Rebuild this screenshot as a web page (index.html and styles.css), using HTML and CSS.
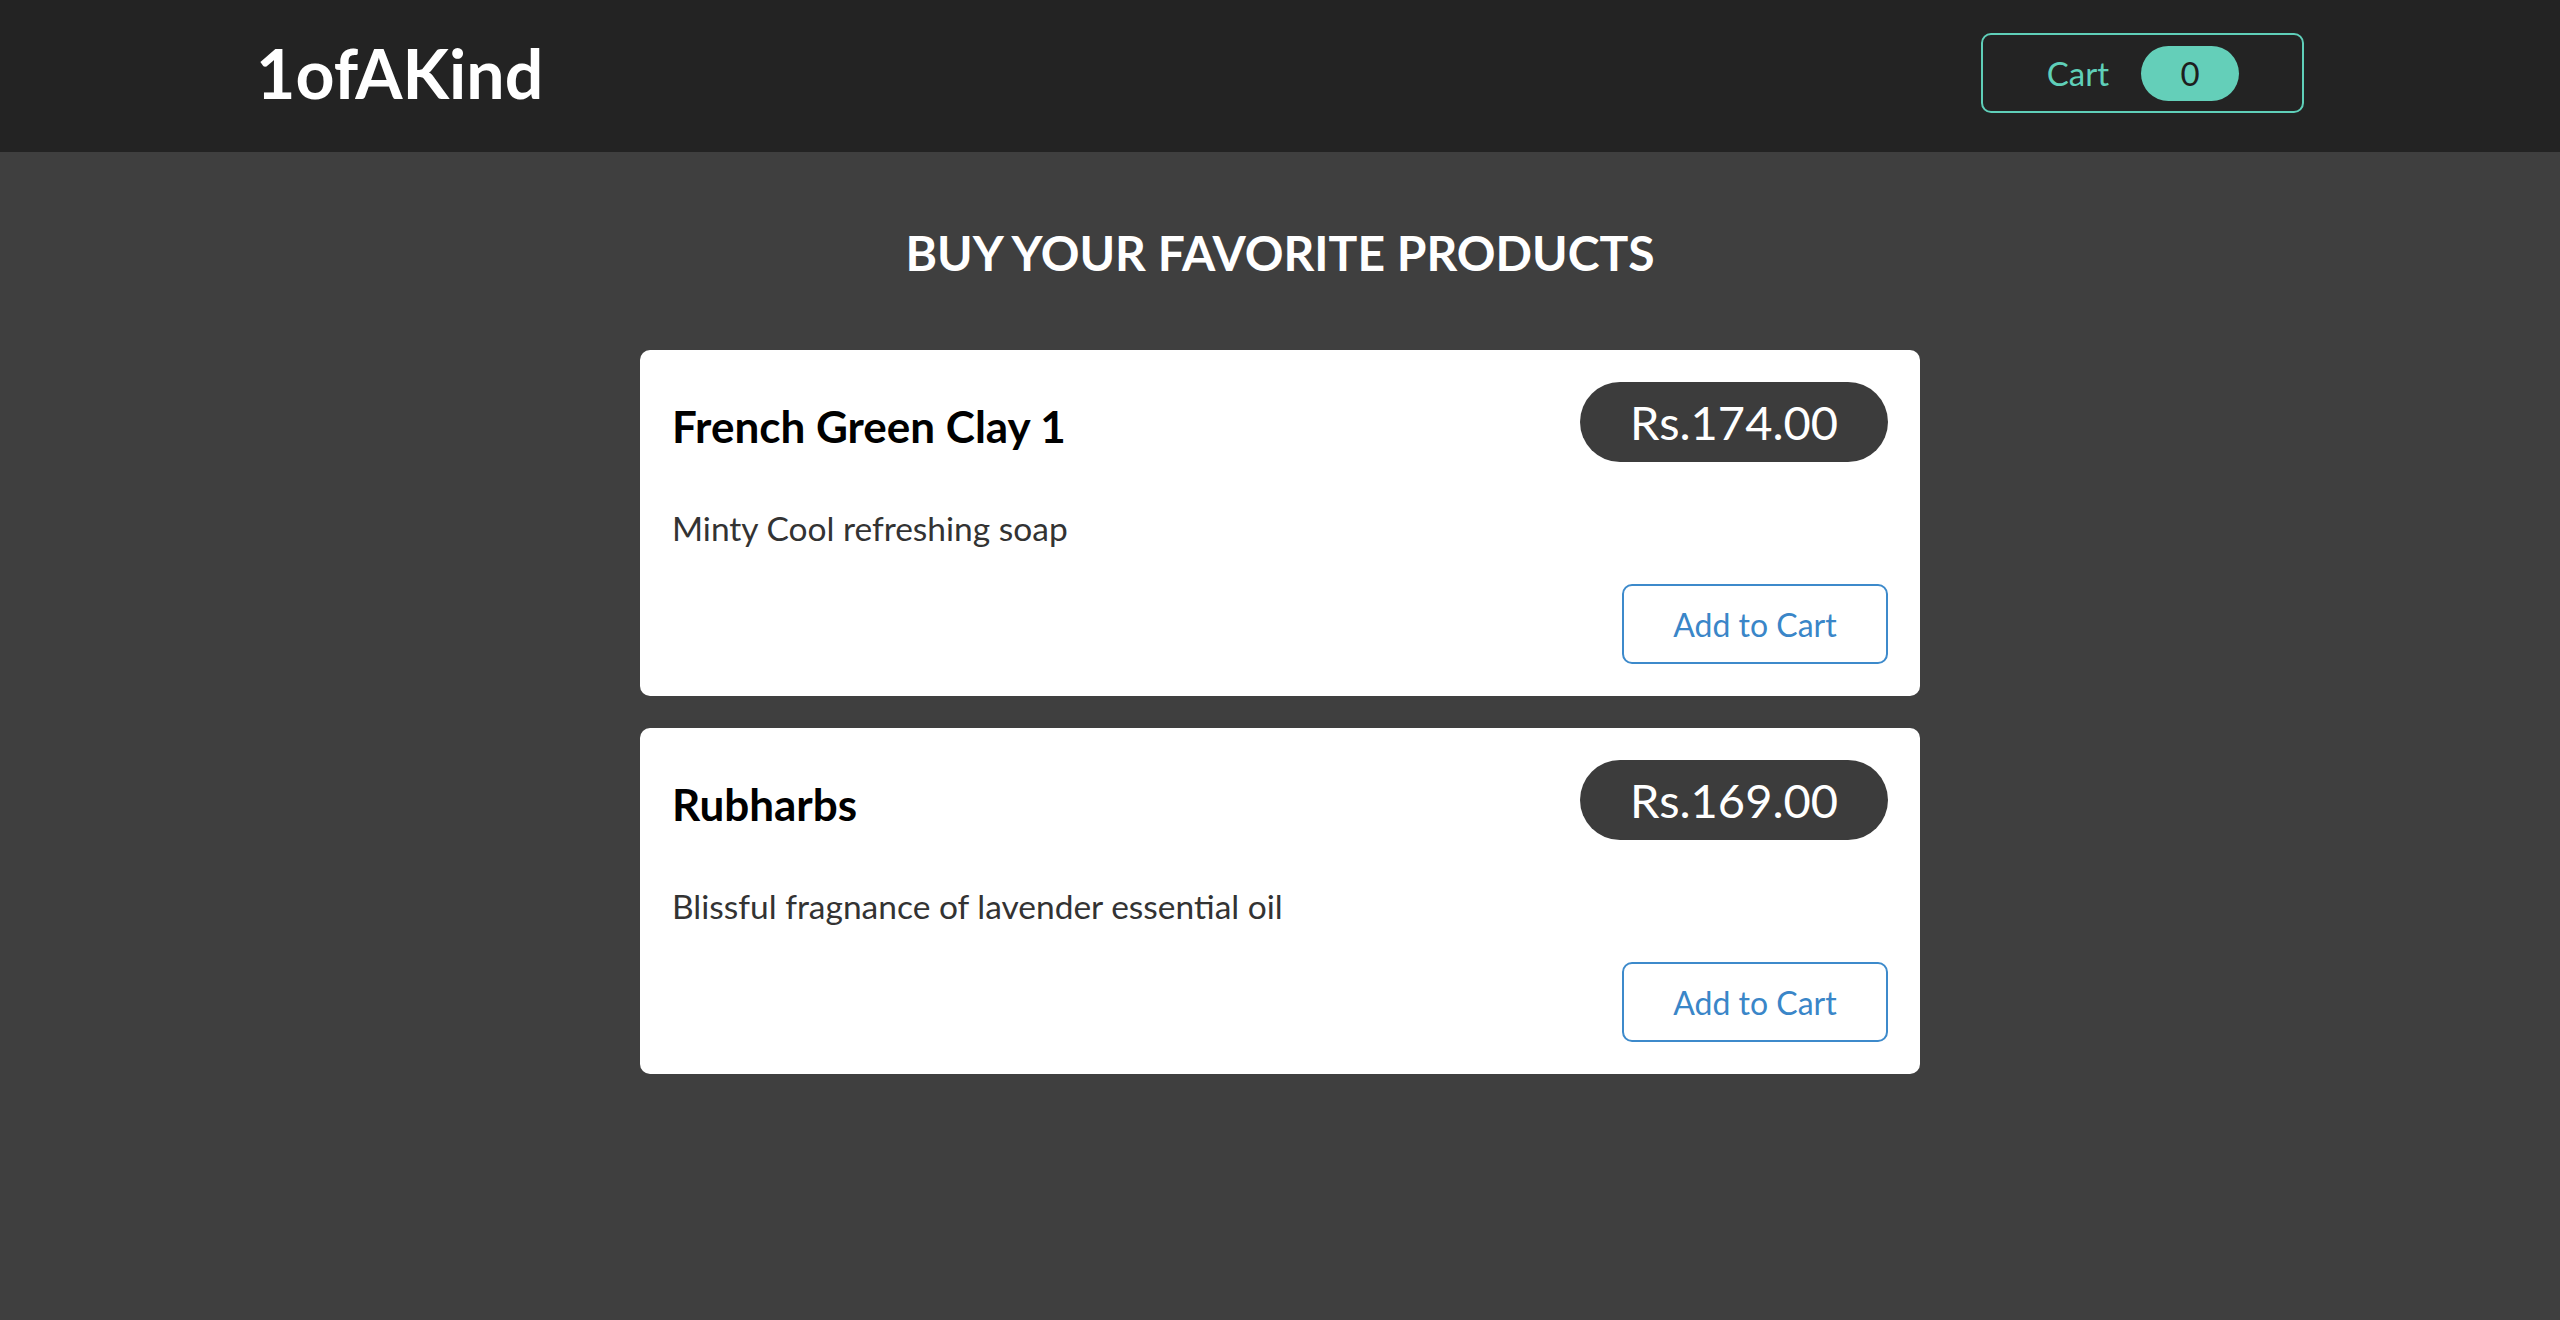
FILE: index.html
```html
<!DOCTYPE html>
<html lang="en">
<head>
<meta charset="utf-8">
<title>1ofAKind</title>
<link rel="stylesheet" href="styles.css">
</head>
<body>
<header class="site-header">
  <div class="header-inner">
    <h1 class="logo">1ofAKind</h1>
    <button class="cart-btn">
      <span class="cart-label">Cart</span>
      <span class="cart-badge">0</span>
    </button>
  </div>
</header>
<main class="main">
  <h2 class="page-title">BUY YOUR FAVORITE PRODUCTS</h2>
  <ul class="product-list">
    <li class="card">
      <div class="card-top">
        <h3 class="card-title">French Green Clay 1</h3>
        <div class="price">Rs.174.00</div>
      </div>
      <p class="card-desc">Minty Cool refreshing soap</p>
      <div class="card-actions">
        <button class="add-btn">Add to Cart</button>
      </div>
    </li>
    <li class="card">
      <div class="card-top">
        <h3 class="card-title">Rubharbs</h3>
        <div class="price">Rs.169.00</div>
      </div>
      <p class="card-desc">Blissful fragnance of lavender essential oil</p>
      <div class="card-actions">
        <button class="add-btn">Add to Cart</button>
      </div>
    </li>
  </ul>
</main>
</body>
</html>
```

FILE: styles.css
```css
* { box-sizing: border-box; }

html, body {
  margin: 0;
  padding: 0;
}

body {
  background: #3f3f3f;
  font-family: "Lato", "Open Sans", sans-serif;
  min-height: 1320px;
}

.site-header {
  background: #232323;
  height: 152px;
  display: flex;
  align-items: center;
}

.header-inner {
  width: 2048px;
  margin: 0 auto;
  display: flex;
  justify-content: space-between;
  align-items: center;
  padding-bottom: 6px;
}

.logo {
  margin: 0;
  color: #ffffff;
  font-size: 68px;
  font-weight: 700;
  line-height: 1;
}

.cart-btn {
  display: flex;
  align-items: center;
  gap: 32px;
  height: 80px;
  padding: 0 63px 0 64px;
  background: transparent;
  border: 2px solid #5fcfb9;
  border-radius: 10px;
  font-family: inherit;
  cursor: pointer;
}

.cart-label {
  color: #5fcfb9;
  font-size: 33px;
  line-height: 1;
}

.cart-badge {
  display: flex;
  align-items: center;
  justify-content: center;
  width: 98px;
  height: 55px;
  border-radius: 28px;
  background: #64cfb9;
  color: #1e1e1e;
  font-size: 33px;
}

.main {
  display: flex;
  flex-direction: column;
  align-items: center;
}

.page-title {
  margin: 72px 0 68px;
  color: #ffffff;
  font-size: 48px;
  font-weight: 700;
  line-height: 58px;
}

.product-list {
  list-style: none;
  margin: 0;
  padding: 0;
  width: 1280px;
  display: flex;
  flex-direction: column;
  gap: 32px;
}

.card {
  background: #ffffff;
  border-radius: 10px;
  padding: 32px;
}

.card-top {
  display: flex;
  justify-content: space-between;
  align-items: center;
  height: 80px;
}

.card-title {
  margin: 0;
  color: #000000;
  font-size: 44px;
  font-weight: 700;
  line-height: 1;
  padding-top: 8px;
}

.price {
  height: 80px;
  display: flex;
  align-items: center;
  padding: 0 50px;
  border-radius: 40px;
  background: #3c3c3c;
  color: #ffffff;
  font-size: 47px;
}

.card-desc {
  margin: 42px 0 32px;
  color: #333333;
  font-size: 33.5px;
  line-height: 48px;
}

.card-actions {
  display: flex;
  justify-content: flex-end;
}

.add-btn {
  width: 266px;
  height: 80px;
  background: #ffffff;
  border: 2px solid #3d8acb;
  border-radius: 10px;
  color: #3a86c8;
  font-family: inherit;
  font-size: 32px;
  cursor: pointer;
}
```
